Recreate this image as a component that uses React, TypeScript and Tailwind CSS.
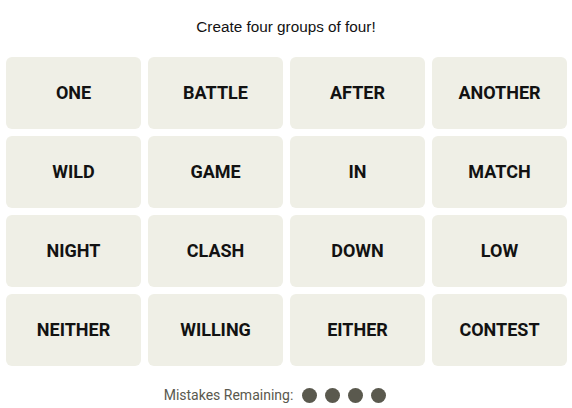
import React from "react";

const words = [
  "ONE", "BATTLE", "AFTER", "ANOTHER",
  "WILD", "GAME", "IN", "MATCH",
  "NIGHT", "CLASH", "DOWN", "LOW",
  "NEITHER", "WILLING", "EITHER", "CONTEST",
];

export default function App() {
  return (
    <div className="w-[572px] h-[408px] bg-white flex flex-col" style={{ fontFamily: "Roboto, 'Liberation Sans', sans-serif" }}>
      <div className="h-[57px] flex items-center justify-center pb-[2px]">
        <p className="text-[15.3px] text-[#121212]" style={{ fontFamily: "'Liberation Sans', Arial, sans-serif" }}>Create four groups of four!</p>
      </div>
      <div className="grid grid-cols-4 gap-x-[7px] gap-y-[7px] pl-[6px] pr-[5px]">
        {words.map((w) => (
          <div key={w} className="h-[72px] rounded-[6px] bg-[#efefe6] flex items-center justify-center pb-[1px]">
            <span className="text-[18px] font-bold text-[#121212]">{w}</span>
          </div>
        ))}
      </div>
      <div className="flex-1 flex items-center justify-center pt-[16px] pr-[22px] gap-[9px]">
        <span className="text-[14px] text-[#5a594e]">Mistakes Remaining:</span>
        <div className="flex gap-[8px]">
          {[0, 1, 2, 3].map((i) => (
            <div key={i} className="w-[15px] h-[15px] rounded-full bg-[#5a594e]" />
          ))}
        </div>
      </div>
    </div>
  );
}
